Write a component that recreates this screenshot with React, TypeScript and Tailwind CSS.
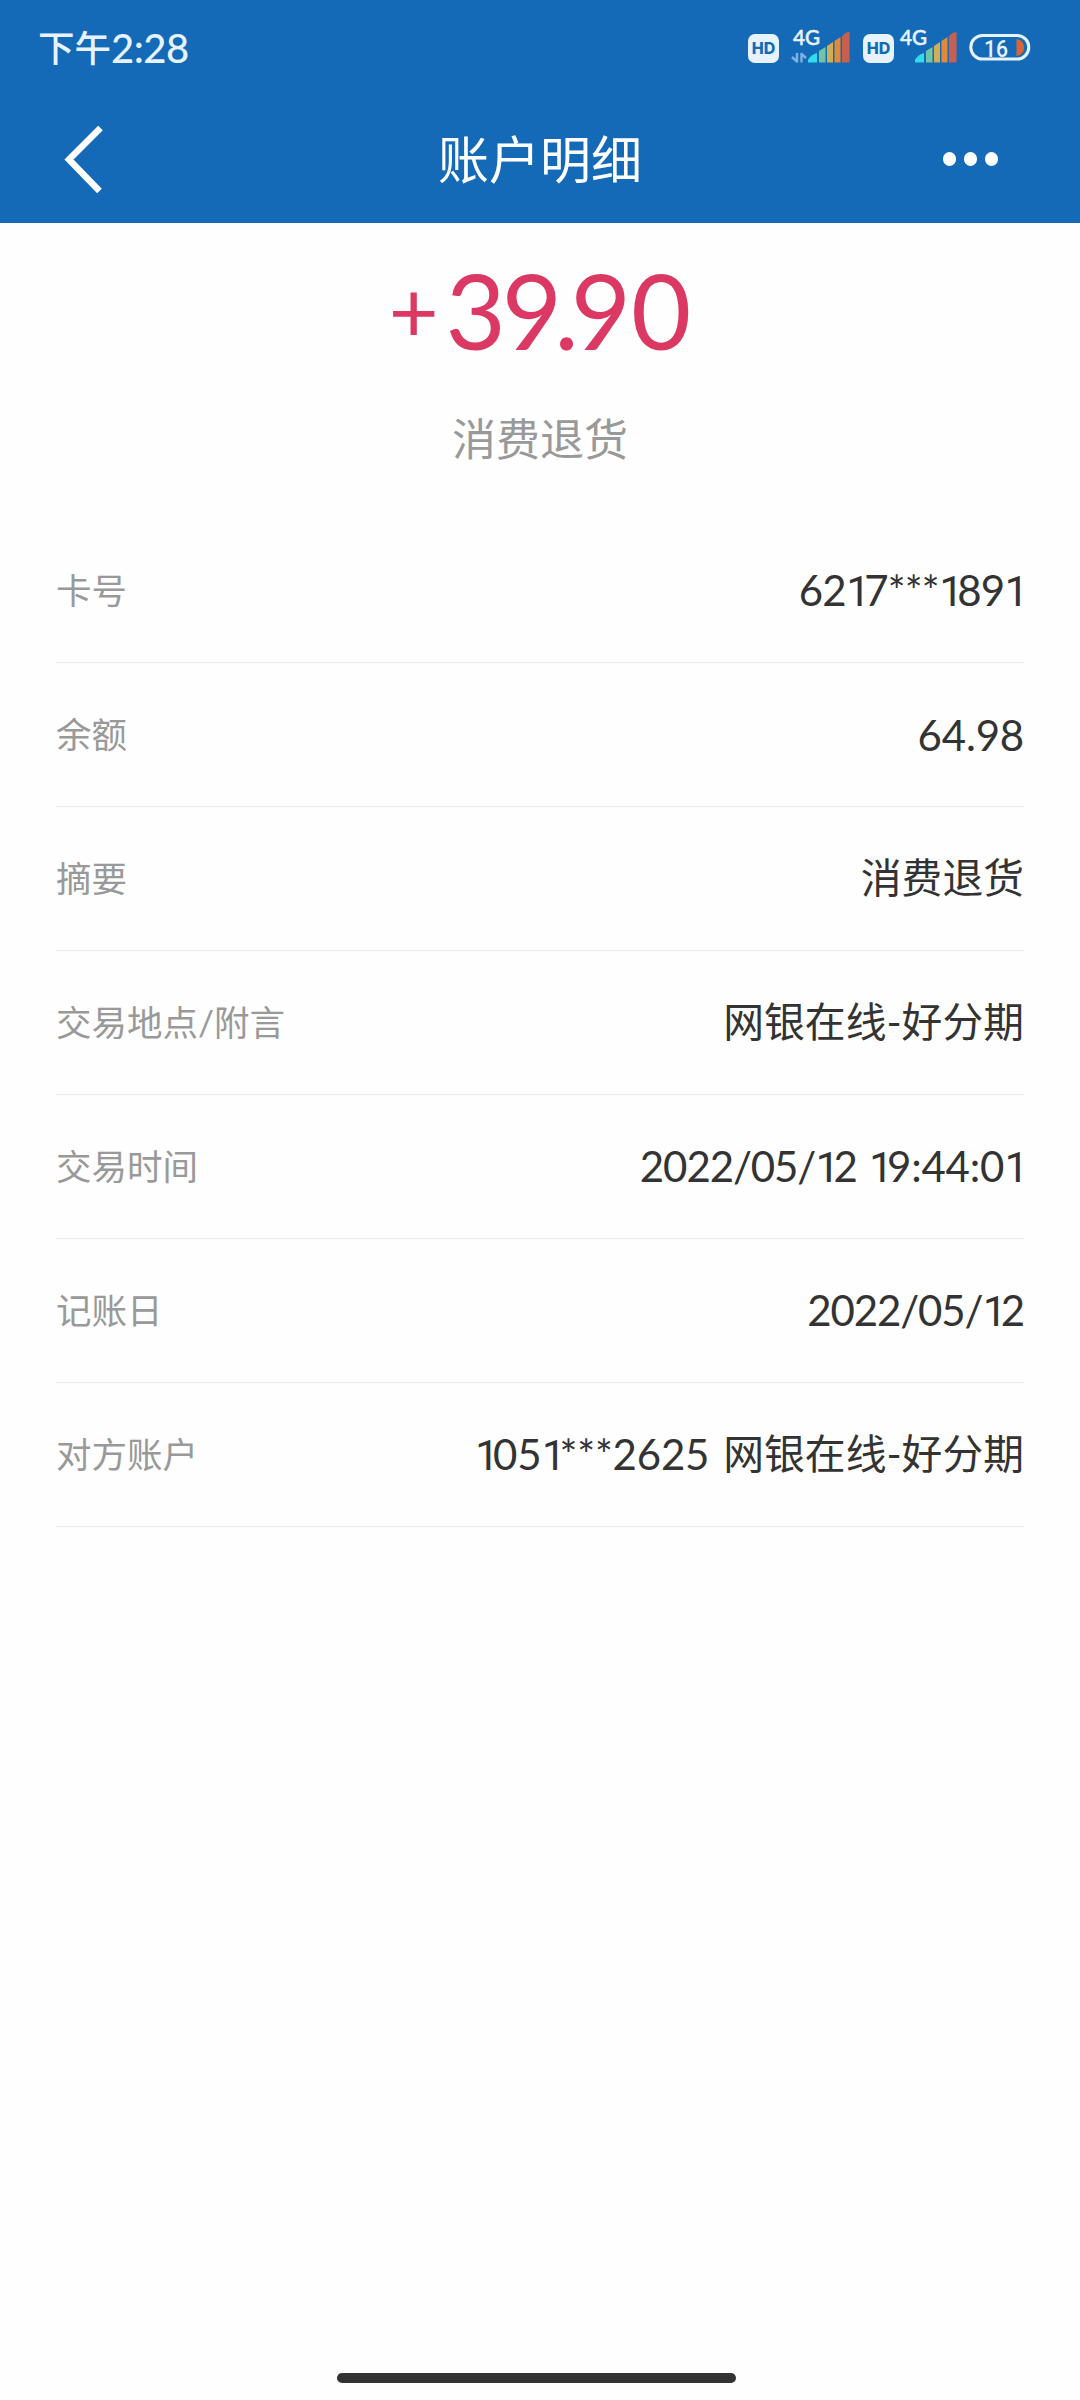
type Part = { text: string; cls: string };
type Row = { label: string; parts: Part[] };

const cjk = 'text-[40.800px]';

const rows: Row[] = [
  { label: '卡号', parts: [{ text: '6217***1891', cls: 'text-[42px] tracking-[-0.8px] mr-[1.500px]' }] },
  { label: '余额', parts: [{ text: '64.98', cls: 'text-[42px] tracking-[-0.2px]' }] },
  { label: '摘要', parts: [{ text: '消费退货', cls: cjk }] },
  { label: '交易地点/附言', parts: [{ text: '网银在线-好分期', cls: cjk }] },
  {
    label: '交易时间',
    parts: [
      { text: '2022/05/12', cls: 'text-[42px] tracking-[-1.1px]' },
      { text: '19:44:01', cls: 'text-[42px] tracking-[-0.2px] ml-[12px] mr-[1.500px]' },
    ],
  },
  { label: '记账日', parts: [{ text: '2022/05/12', cls: 'text-[42px] tracking-[-1.1px]' }] },
  {
    label: '对方账户',
    parts: [
      { text: '1051***2625', cls: 'text-[42px] tracking-[-0.2px] mr-[14px]' },
      { text: '网银在线-好分期', cls: cjk },
    ],
  },
];

// A footless, narrow "1" keeps the numbers proportionally spaced.
function Figures({ text }: { text: string }) {
  return (
    <>
      {text.split('').map((c, i) =>
        c === '1' ? (
          <span key={i} className="ml-[0.5px] font-['Roboto',sans-serif] tracking-[-0.14em]">1</span>
        ) : (
          c
        ),
      )}
    </>
  );
}

function HdBadge() {
  return (
    <div className="flex h-[29px] w-[31px] items-center justify-center rounded-[7px] bg-[#e6f3ff] font-['Inter',sans-serif] text-[16px] font-extrabold leading-none text-[#146ab6]">
      HD
    </div>
  );
}

function Signal({ data = false }: { data?: boolean }) {
  return (
    <svg width="60" height="52" viewBox="0 -8 60 52" className="block">
      <text x="3" y="14.500" fontSize="21" fontWeight="500" fill="#e6f3ff" stroke="#e6f3ff" strokeWidth="0.5" fontFamily="Lato, sans-serif" textLength="27" lengthAdjust="spacingAndGlyphs">4G</text>
      {data && (
        <g stroke="#7db2e2" strokeWidth="2.4" fill="none">
          <path d="M7 23v9.500M7.500 32l-5.500-5M11.500 32.500V23M11 23.500l5 4.500" />
        </g>
      )}
      <path d="M18 32.500v-2.500q3-5.500 9-7v9.500z" fill="#2fdcea" />
      <path d="M29 32.500V21l6.500-4v15.500z" fill="#73c3a5" />
      <path d="M37 32.500V16l6-4v20.500z" fill="#cfae55" />
      <path d="M44.500 32.500V11l6-4v25.500z" fill="#e2893a" />
      <path d="M52 32.500V6.500q3-4.500 7.500-4.500v30.500z" fill="#c9604f" />
    </svg>
  );
}

function Battery() {
  return (
    <svg width="62" height="28" viewBox="0 0 62 28" className="block">
      <path d="M47.500 5v17q7.500-1 7.500-8.500t-7.500-8.500z" fill="#db6437" />
      <rect x="1.800" y="1.500" width="58" height="23.500" rx="11.700" fill="none" stroke="#e6f3ff" strokeWidth="3" />
      <text x="15" y="22.500" fontSize="23" fontWeight="500" fill="#e6f3ff" fontFamily="Roboto, sans-serif" textLength="24" lengthAdjust="spacingAndGlyphs">16</text>
    </svg>
  );
}

export default function App() {
  return (
    <div className="flex h-[2400px] w-[1080px] flex-col bg-[#fefefe] font-['Lato','Noto_Sans_CJK_SC',sans-serif]">
      <header className="h-[223px] shrink-0 bg-[#146ab6]">
        <div className="flex h-[96px] items-center justify-between pl-[38px] pr-[49px]">
          <div className="flex items-center font-medium leading-none text-[#e6f3ff]">
            <span className="text-[36.500px]">下午</span>
            <span className="text-[40px] tracking-[-0.5px]">2:28</span>
          </div>
          <div className="flex items-center">
            <HdBadge />
            <div className="ml-[11px]"><Signal data /></div>
            <div className="ml-[13px]"><HdBadge /></div>
            <div className="ml-[3px]"><Signal /></div>
            <div className="ml-[12px]"><Battery /></div>
          </div>
        </div>
        <div className="grid h-[127px] grid-cols-[1fr_auto_1fr] items-center pb-px">
          <svg width="44" height="72" viewBox="0 0 44 72" className="ml-[62px] block">
            <path d="M38.500 5L7 36.500L37.500 68" fill="none" stroke="#fff" strokeWidth="6.500" />
          </svg>
          <h1 className="text-[51px] leading-none text-white">账户明细</h1>
          <div className="mr-[82px] flex justify-end gap-[8px]">
            <i className="h-[14px] w-[13px] rounded-full bg-white" />
            <i className="h-[14px] w-[13px] rounded-full bg-white" />
            <i className="h-[14px] w-[13px] rounded-full bg-white" />
          </div>
        </div>
      </header>
      <section className="flex h-[296px] shrink-0 flex-col items-center">
        <div className="mt-[32px] h-[110px] whitespace-nowrap text-[104px] leading-[110px] text-[#db3863]">
          <span className="mr-[7px] inline-block align-[8px] text-[86px] leading-none">+</span>
          <span className="tracking-[-4px]">3</span>
          <span className="tracking-[-8px]">9.</span>90
        </div>
        <div className="mt-[44px] text-[44px] leading-[60px] text-[#999]">消费退货</div>
      </section>
      <main className="mx-[56px]">
        {rows.map((r) => (
          <div key={r.label} className="flex h-[144px] items-center justify-between border-b border-[#e9e9e9]">
            <span className="text-[35.500px] leading-none text-[#999]">{r.label}</span>
            <span className="flex items-center whitespace-pre leading-none text-[#333]">
              {r.parts.map((p) => (
                <span key={p.text} className={p.cls}><Figures text={p.text} /></span>
              ))}
            </span>
          </div>
        ))}
      </main>
      <div className="mb-[17px] ml-[337px] mt-auto h-[10px] w-[399px] rounded-full bg-[#333]" />
    </div>
  );
}
